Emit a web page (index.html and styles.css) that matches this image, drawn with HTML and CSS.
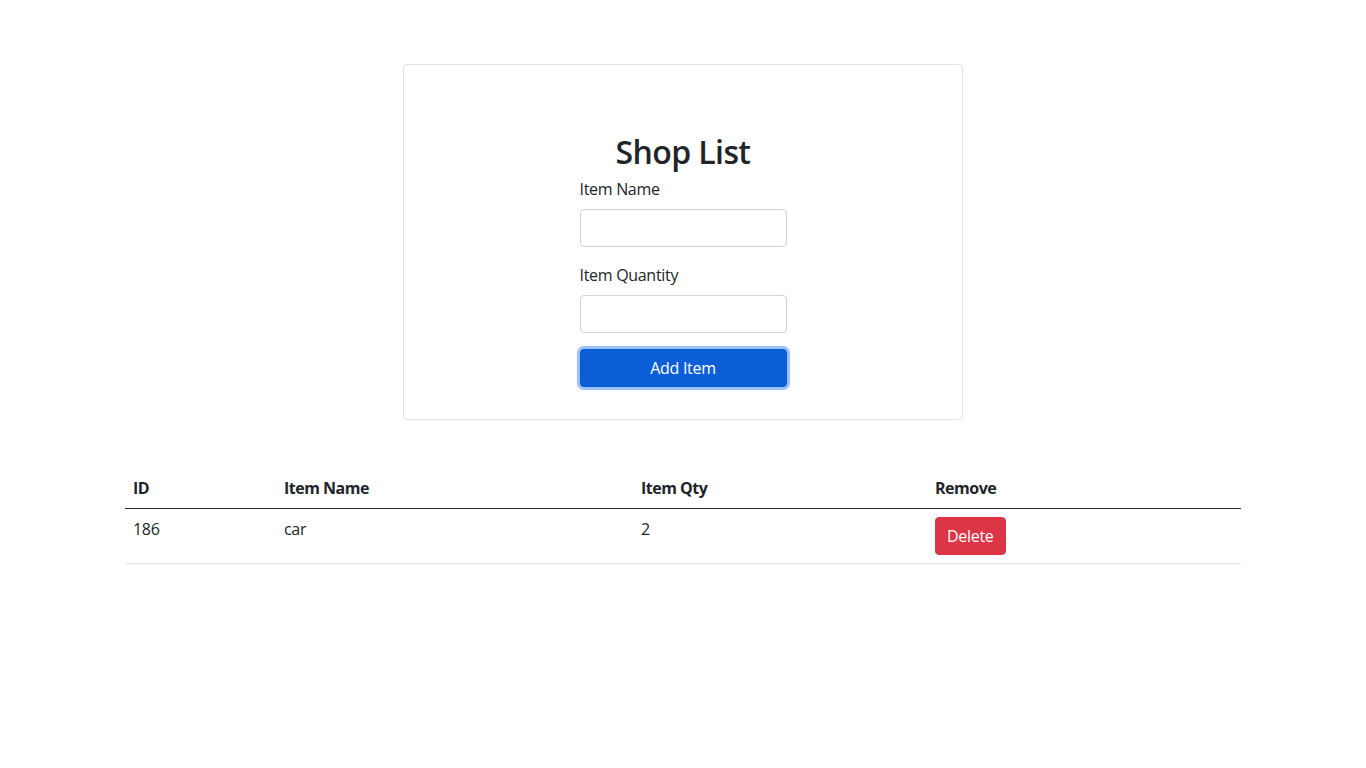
FILE: index.html
```html
<!DOCTYPE html>
<html lang="en">
<head>
<meta charset="utf-8">
<title>Shop List</title>
<link rel="stylesheet" href="styles.css">
</head>
<body>
<div class="container">
  <div class="card">
    <h2 class="title">Shop List</h2>
    <form class="form">
      <div class="field">
        <label class="label" for="name">Item Name</label>
        <input class="input" id="name" type="text">
      </div>
      <div class="field">
        <label class="label" for="qty">Item Quantity</label>
        <input class="input" id="qty" type="text">
      </div>
      <button type="button" class="btn btn-primary">Add Item</button>
    </form>
  </div>

  <table class="table">
    <thead>
      <tr>
        <th class="col-id">ID</th>
        <th class="col-name">Item Name</th>
        <th class="col-qty">Item Qty</th>
        <th>Remove</th>
      </tr>
    </thead>
    <tbody>
      <tr>
        <td>186</td>
        <td>car</td>
        <td>2</td>
        <td><button type="button" class="btn btn-danger">Delete</button></td>
      </tr>
    </tbody>
  </table>
</div>
</body>
</html>
```

FILE: styles.css
```css
* { box-sizing: border-box; }

body {
  margin: 0;
  font-family: "Open Sans", "Noto Sans", sans-serif;
  font-size: 16px;
  line-height: 1.5;
  letter-spacing: -0.3px;
  color: #212529;
  background: #fff;
}

.container {
  max-width: 1140px;
  margin: 0 auto;
  padding: 0 12px;
}

.card {
  width: 560px;
  margin: 64px auto 0;
  border: 1px solid #dee2e6;
  border-radius: 4px;
  padding: 68px 0 32px;
}

.title {
  margin: 0 0 6px;
  text-align: center;
  font-size: 32px;
  font-weight: 600;
  line-height: 1.2;
  letter-spacing: -0.6px;
}

.form {
  width: 207px;
  margin: 0 auto;
}

.field {
  margin-bottom: 16px;
}

.label {
  display: block;
  margin-bottom: 8px;
}

.input {
  display: block;
  width: 100%;
  height: 38px;
  padding: 6px 12px;
  font: inherit;
  border: 1px solid #ced4da;
  border-radius: 4px;
  background: #fff;
}

.btn {
  display: inline-block;
  font: inherit;
  letter-spacing: inherit;
  line-height: 1.5;
  padding: 6px 11px;
  border: 1px solid transparent;
  border-radius: 4px;
  color: #fff;
  cursor: pointer;
}

.btn-primary {
  display: block;
  width: 100%;
  background: #0b5ed7;
  border-color: #0a58ca;
  box-shadow: 0 0 0 3px rgba(49, 132, 253, 0.5);
}

.btn-danger {
  background: #dc3545;
  border-color: #dc3545;
}

.table {
  width: 100%;
  margin-top: 48px;
  border-collapse: collapse;
}

.table th,
.table td {
  padding: 8px;
  text-align: left;
  vertical-align: top;
}

.table th {
  font-weight: 700;
  letter-spacing: -0.5px;
  border-bottom: 1px solid #212529;
}

.table td {
  border-bottom: 1px solid #dee2e6;
}

.col-id { width: 151px; }
.col-name { width: 357px; }
.col-qty { width: 294px; }
```
